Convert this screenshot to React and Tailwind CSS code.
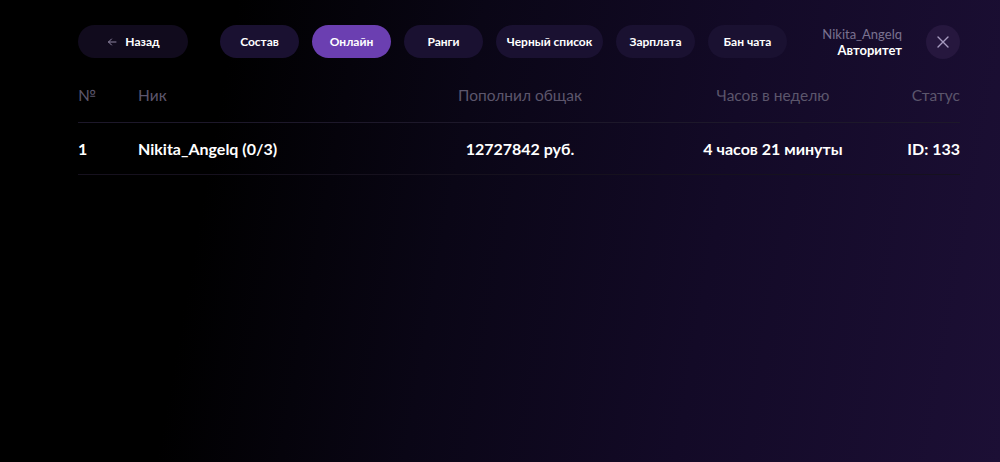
import React from "react";

const tabs = [
  { t: "Состав", w: "w-[79px]" },
  { t: "Онлайн", w: "w-[79px]", active: true },
  { t: "Ранги", w: "w-[79px]" },
  { t: "Черный список", w: "w-[107px]" },
  { t: "Зарплата", w: "w-[79px]" },
  { t: "Бан чата", w: "w-[79px]" },
];

export default function App() {
  return (
    <div
      className="w-[1000px] h-[462px] overflow-hidden bg-[linear-gradient(100deg,#000000_22%,#0a0616_45%,#130a27_70%,#1c0f35_100%)] text-white"
      style={{ fontFamily: "Lato, 'Noto Sans', sans-serif" }}
    >
      <div className="pl-[78px] pr-[40px] pt-[25px]">
        <div className="flex items-center h-[33px]">
          <button className="flex items-center justify-center gap-[7px] w-[110px] h-[33px] rounded-full bg-[#110b1d] text-[12px] font-bold text-white">
            <svg width="12" height="12" viewBox="0 0 24 24" fill="none" stroke="#8f86a3" strokeWidth="2" strokeLinecap="round" strokeLinejoin="round">
              <path d="M20 12H5" />
              <path d="M11 6l-6 6 6 6" />
            </svg>
            Назад
          </button>
          <div className="flex items-center gap-[13px] ml-[32px]">
            {tabs.map((x) =>
              x.active ? (
                <button key={x.t} className={"h-[33px] rounded-full bg-[#6b3fb1] text-[12px] font-bold text-white " + x.w}>
                  {x.t}
                </button>
              ) : (
                <button key={x.t} className={"h-[33px] rounded-full bg-[#1a1131] text-[12px] font-bold text-white " + x.w}>
                  {x.t}
                </button>
              )
            )}
          </div>
          <div className="ml-auto flex flex-col items-end leading-[16px] mr-[24px]">
            <span className="text-[13px] text-[#7a7290]">Nikita_Angelq</span>
            <span className="text-[13px] font-bold text-white">Авторитет</span>
          </div>
          <button className="w-[34px] h-[34px] rounded-full bg-[#26173e] flex items-center justify-center">
            <svg width="12" height="12" viewBox="0 0 12 12" fill="none" stroke="#a79bc0" strokeWidth="1.4" strokeLinecap="round">
              <path d="M1 1l10 10M11 1L1 11" />
            </svg>
          </button>
        </div>

        <div className="mt-[26px]">
          <div className="grid grid-cols-[60px_282px_253px_200px_1fr] items-center leading-[22px] pb-[16px] text-[15.5px] text-[#5c566c] border-b border-[#1d182a]">
            <span>№</span>
            <span>Ник</span>
            <span className="text-center pr-[53px]">Пополнил общак</span>
            <span className="text-center">Часов в неделю</span>
            <span className="text-right">Статус</span>
          </div>
          <div className="grid grid-cols-[60px_282px_253px_200px_1fr] items-center h-[52px] text-[16px] font-bold text-white border-b border-[#16111e]">
            <span>1</span>
            <span>Nikita_Angelq (0/3)</span>
            <span className="text-center pr-[53px]">12727842 руб.</span>
            <span className="text-center">4 часов 21 минуты</span>
            <span className="text-right">ID: 133</span>
          </div>
        </div>
      </div>
    </div>
  );
}
